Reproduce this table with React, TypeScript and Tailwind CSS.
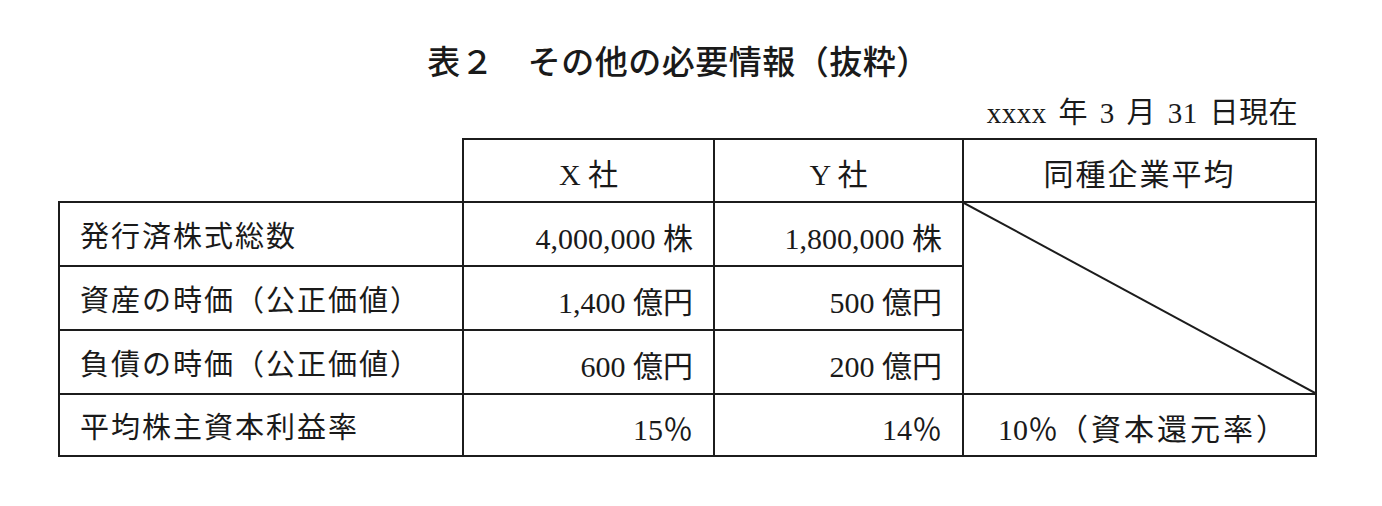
const body = "font-['Liberation_Serif','Noto_Sans_CJK_JP',serif]";

const rows = [
  { label: "発行済株式総数", x: "4,000,000 株", y: "1,800,000 株" },
  { label: "資産の時価（公正価値）", x: "1,400 億円", y: "500 億円" },
  { label: "負債の時価（公正価値）", x: "600 億円", y: "200 億円" },
];

const cell = "border-2 border-[#1c1c1c]";

export default function App() {
  return (
    <div className={`w-[1382px] h-[506px] bg-white text-[#1a1a1a] ${body}`}>
      <div className="w-[1257px] ml-[58px] pt-[36px]">
        <h1 className="pr-4 text-center font-['Noto_Sans_CJK_JP',sans-serif] text-[33px] font-medium leading-[48px] tracking-[0.5px]">
          表２　その他の必要情報（抜粋）
        </h1>
        <p className="pr-[17px] mt-[12px] text-right text-[29px] leading-[34px] tracking-[0.5px] [word-spacing:4px]">
          xxxx 年 3 月 31 日現在
        </p>
        <table className="mt-[8px] w-[1257px] table-fixed border-collapse text-[30px]">
          <colgroup>
            <col className="w-[404px]" />
            <col className="w-[251px]" />
            <col className="w-[249px]" />
            <col className="w-[353px]" />
          </colgroup>
          <tbody>
            <tr className="h-[63px]">
              <td className="border-r-2 border-b-2 border-[#1c1c1c]" />
              <td className={`${cell} text-center pt-2`}>X 社</td>
              <td className={`${cell} text-center pt-2`}>Y 社</td>
              <td className={`${cell} text-center pt-2 tracking-[2px]`}>同種企業平均</td>
            </tr>
            {rows.map((r, i) => (
              <tr key={r.label} className="h-[64px]">
                <td className={`${cell} pl-5 pt-2 tracking-[2px] text-[29px]`}>{r.label}</td>
                <td className={`${cell} pr-5 pt-2 text-right`}>{r.x}</td>
                <td className={`${cell} pr-5 pt-2 text-right`}>{r.y}</td>
                {i === 0 && (
                  <td rowSpan={3} className={`${cell} relative p-0`}>
                    <svg
                      className="absolute inset-0 w-full h-full"
                      viewBox="0 0 100 100"
                      preserveAspectRatio="none"
                    >
                      <line
                        x1="0"
                        y1="0"
                        x2="100"
                        y2="100"
                        stroke="#1c1c1c"
                        strokeWidth="2"
                        vectorEffect="non-scaling-stroke"
                      />
                    </svg>
                  </td>
                )}
              </tr>
            ))}
            <tr className="h-[62px]">
              <td className={`${cell} pl-5 pt-2 tracking-[2px] text-[29px]`}>平均株主資本利益率</td>
              <td className={`${cell} pr-5 pt-2 text-right`}>15％</td>
              <td className={`${cell} pr-5 pt-2 text-right`}>14％</td>
              <td className={`${cell} pt-2 pl-2 text-center`}>
                10％<span className="tracking-[3px]">（資本還元率）</span>
              </td>
            </tr>
          </tbody>
        </table>
      </div>
    </div>
  );
}
